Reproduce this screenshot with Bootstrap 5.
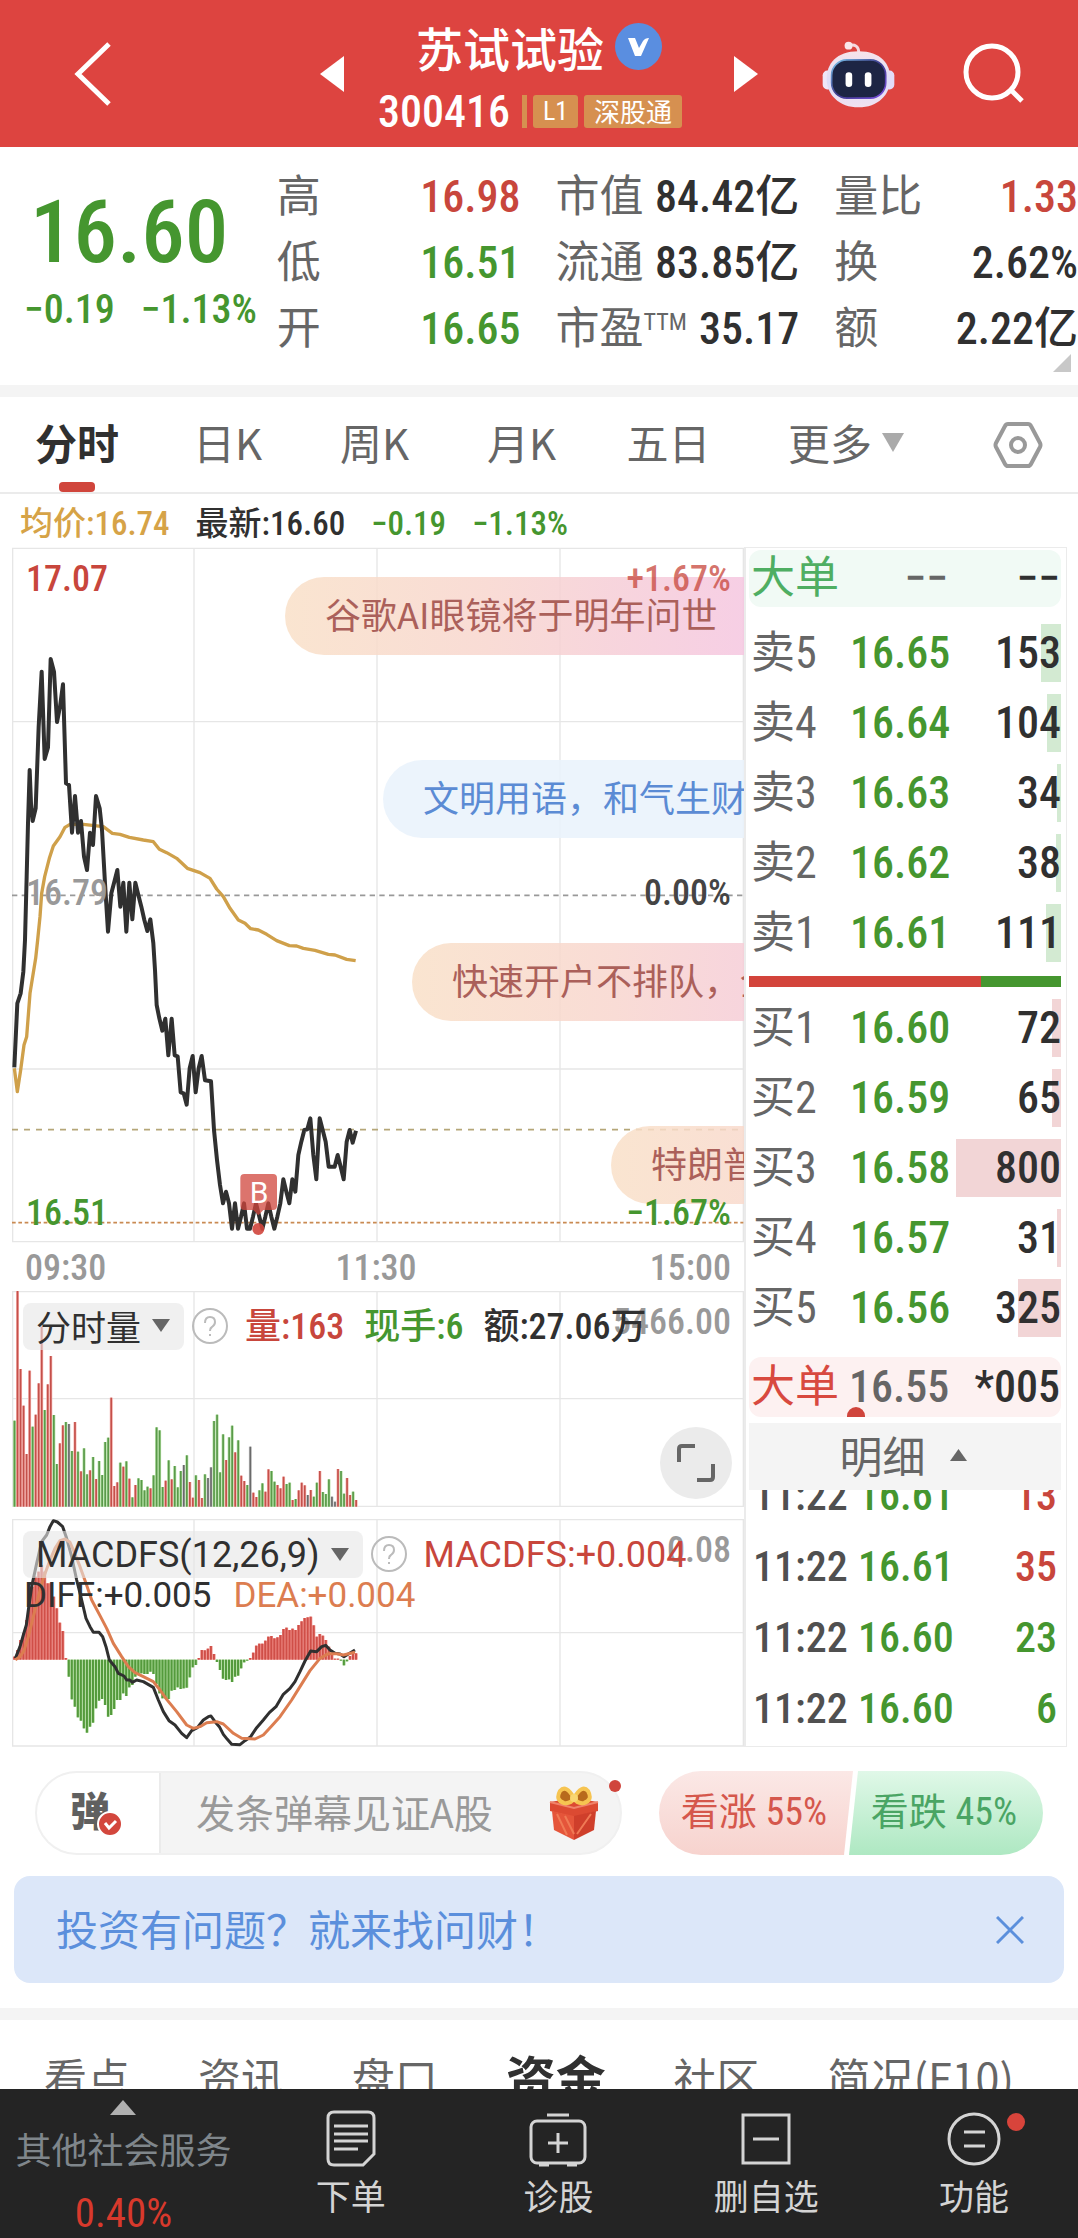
<!DOCTYPE html>
<html lang="zh-CN">
<head>
<meta charset="utf-8">
<meta name="viewport" content="width=device-width, initial-scale=1">
<title>苏试试验 300416</title>
<link rel="stylesheet" href="https://cdn.jsdelivr.net/npm/bootstrap@5.3.0/dist/css/bootstrap.min.css">
<style>
:root{--up:#c8463c;--down:#45962f;--ink:#303030;--dim:#666;--num:"Roboto Condensed",Roboto,"Noto Sans CJK SC",sans-serif}
body{font-family:var(--num);color:var(--ink);background:#fff;font-size:36px;line-height:1}
button,input{font:inherit;color:inherit;border:0;background:none;padding:0}
a{color:inherit;text-decoration:none}
svg{display:block}
.up{color:var(--up)}.down{color:var(--down)}.dim{color:var(--dim)}
.fw-num{font-weight:500}
.cjk{font-family:"Noto Sans CJK SC",sans-serif}
.band{height:12px;background:#f4f4f4}

.topbar{display:grid;grid-template-columns:1fr 24px 390px 24px 1fr;align-items:center;height:147px;background:#dd4440;color:#fff}
.topbar .back{padding-left:74px}
.topbar .tools{gap:68px;padding-right:54px}
.stock-name{font-size:47px;line-height:62px;font-weight:500;gap:11px}
.stock-code{font-size:44px;line-height:40px;font-weight:500;gap:6px;margin:14px 18px 0 0}
.tag{background:#d69050;font-size:26px;line-height:33px;height:33px;border-radius:3px;padding:0 10px;font-weight:400}
.tag.cjk{line-height:31px}
.tag-edge{width:5px;height:33px;background:#d69050;margin-left:6px}

.quote{display:grid;grid-template-columns:repeat(4,minmax(0,1fr));column-gap:37px;padding:16px 0 24px;position:relative}
.quote dl{margin:0 0 0 -2px}
.quote .pair{display:flex;justify-content:space-between;height:66px;line-height:68px;font-size:44px;white-space:nowrap}
.quote dt{font-weight:400;color:var(--dim)}
.quote dd{margin:0;font-weight:500}
.quote .ttm{font-size:24px;vertical-align:14px;line-height:1}
.price-big{font-size:87px;line-height:90px;padding:24px 0 0 30px;font-weight:500}
.price-chg{font-size:40px;line-height:66px;padding-left:24px;gap:26px;white-space:nowrap}
.corner{position:absolute;right:7px;bottom:13px}

.periods{display:grid;grid-template-columns:154fr 147fr 147fr 147fr 147fr 208fr 128fr;height:97px;border-bottom:2px solid #ebebeb}
.periods button{display:flex;align-items:center;justify-content:center;gap:10px;font:400 42px/1 "Noto Sans CJK SC",sans-serif;color:var(--dim);position:relative;padding-bottom:5px}
.periods button:last-child{padding:0 0 0 8px}
.periods .on{font-weight:700;color:var(--ink)}
.periods .on::after{content:"";position:absolute;bottom:0;width:36px;height:10px;border-radius:4px;background:#d0453c}
.avgline{height:53px;line-height:60px;padding-left:20px;gap:26px;font-size:33px}

.board{display:grid;grid-template-columns:732fr 323fr;padding:0 11px 0 12px}
.plot{position:relative;overflow:hidden}
.plot svg.chart{width:100%}
.tick-label{position:absolute;font-size:36px;line-height:42px;font-weight:500}
.l15{left:14px}.r13{right:13px}
.axis{height:48px;line-height:50px;padding:0 13px;color:#999}
.axis span:nth-child(2){margin-right:4px}
.bullet{position:absolute;height:78px;border-radius:39px 0 0 39px;padding-left:40px;line-height:72px;font-size:36px;white-space:nowrap;color:#ab605a;right:0;overflow:hidden;background:linear-gradient(90deg,rgba(249,224,200,.85),rgba(248,214,206,.85) 200px,rgba(246,206,214,.85) 320px,rgba(245,198,224,.85) 460px)}
.bullet.calm{color:#5b8bd4;background:rgba(233,242,252,.85)}
.strip{position:absolute;left:11px;top:12px;white-space:nowrap;height:47px}
.pick{background:rgba(230,230,230,.6);border-radius:8px;height:47px;padding:0 14px 0 13px;gap:11px;display:flex;align-items:center}
.pick.cjk{padding-bottom:3px;font-size:35px}
.vol-strip{font-size:36px}
.macd-strip{font-family:Roboto,sans-serif}
.macd-second{position:absolute;left:12px;top:57px;font:400 35px/40px Roboto,sans-serif;gap:22px}
.zoomer{position:absolute;right:12px;bottom:12px;width:72px;height:72px;border-radius:50%;background:#ebebeb;display:grid;place-items:center}

.depth{border:1px solid #ebebeb;border-left-width:2px;height:1200px;padding:2px 5px 0 3px;overflow:hidden;font-size:44px}
.depth table{width:100%;table-layout:fixed;border-collapse:collapse}
.depth th,.depth td{padding:0;font-weight:500;white-space:nowrap;position:relative}
.depth th{font-weight:400;color:var(--dim);padding-left:2px}
.depth col.c1{width:101px}.depth col.c2{width:104px}
.book tr{height:70px}
.book td:last-child{text-align:right}
.book i{position:absolute;right:0;top:6px;height:58px;z-index:-1}
.book td:last-child{z-index:0}
.asks i{background:#d3ead2}.bids i{background:#f2d5d6}
.big{display:grid;grid-template-columns:98px 99px 1fr;padding:0 1px 0 2px;border-radius:12px;font-weight:500}
.big span:first-child{font-weight:400}
.big span:not(:first-child){text-align:right}
.big.sell{background:#f1faf5;height:57px;line-height:57px;margin-bottom:11px}
.big.buy{background:#fdf1f1;height:60px;line-height:60px;margin:14px 0 6px;position:relative;overflow:hidden}
.big.buy::after{content:"";position:absolute;left:98px;top:50px;width:18px;height:18px;border-radius:50%;background:#d0453c}
.balance{height:11px;margin:8px 0 6px;background:var(--down)}
.balance div{height:11px;background:#d3443b}
.detail{width:100%;height:67px;background:#f4f4f4;color:var(--dim);font-size:43px;display:flex;align-items:center;justify-content:center;gap:24px;padding:0 4px 4px 0}
.trades{overflow:hidden}
.trades table{margin-top:-30px;font-size:42px}
.trades tr{height:71px}
.trades th{padding-left:4px;color:#505050;font-weight:500}
.trades td:nth-child(2){padding-left:8px}
.trades td:last-child{text-align:right;padding-right:4px}

.talk{padding:24px 35px 21px;gap:37px}
.say{flex:1;min-width:0;height:84px;border-radius:42px;border:2px solid #f0f0f0;background:#f4f4f4;position:relative}
.say .dan{flex:none;width:124px;background:#fff;border-right:2px solid #ebebeb;border-radius:42px 0 0 42px;position:relative;font:900 40px/1 "Noto Sans CJK SC",sans-serif;color:#606060;padding:0 16px 8px 0}
.say .dan svg{position:absolute;left:60px;top:38px}
.say input{flex:1;width:0;min-width:0;padding:0 0 4px 35px;font-size:39px}
.say input::placeholder{color:#999;opacity:1}
.say .gift{padding-right:21px}
.say .dot{position:absolute;right:-1px;top:7px;width:12px;height:12px;border-radius:50%;background:#d0453c}
.vote{flex:none;width:384px;height:84px;border-radius:42px;overflow:hidden}
.vote button{flex:1;font-size:38px;padding:0 4px 2px 0}
.vote .bull{color:#d5574c;background:linear-gradient(#fbe8e6,#f7d3ce);clip-path:polygon(0 0,100% 0,calc(100% - 9px) 100%,0 100%)}
.vote .bear{color:#4aa564;background:linear-gradient(#e0f8e8,#aee8c2);clip-path:polygon(9px 0,100% 0,100% 100%,0 100%);margin-left:-4px}
.ask{margin:0 14px 25px;height:107px;border-radius:16px;background:#dce7f9;color:#5b8fdc;padding:0 40px 0 42px;font-size:42px}
.ask a{padding-bottom:4px}
.sections{display:flex;height:118px;line-height:112px;padding:0 64px 0 44px;justify-content:space-between;font-family:"Noto Sans CJK SC",sans-serif;font-size:43px;color:var(--dim);white-space:nowrap}
.sections .on{font-weight:700;font-size:50px;color:var(--ink)}

.dock{display:grid;grid-template-columns:247fr 208fr 208fr 208fr 208fr;height:149px;background:#242424;color:#d4d4d4}
.dock a{display:flex;flex-direction:column;align-items:center;font-size:35px;line-height:44px;padding-top:20px;gap:6px;position:relative;white-space:nowrap}
.dock .sector{color:#7f868b;font-size:36px;padding-top:11px;gap:11px}
.dock .sector b{font-weight:400;font-size:41px;color:#d8392c;line-height:44px;margin-top:10px}
.dock .dot{position:absolute;left:137px;top:24px;width:18px;height:18px;border-radius:50%;background:#d8443b}
</style>
<script src="https://cdn.jsdelivr.net/npm/bootstrap@5.3.0/dist/js/bootstrap.bundle.min.js"></script>
</head>
<body>
<header class="topbar">
  <button class="back" aria-label="返回"><svg width="38" height="64" viewBox="0 0 38 64" fill="none" stroke="#fff" stroke-width="5"><path d="M35 2 4 32l31 30"/></svg></button>
  <button aria-label="上一只"><svg width="24" height="36" viewBox="0 0 24 36"><path d="M24 0v36L0 18z" fill="#fff"/></svg></button>
  <div class="d-flex flex-column align-items-center">
    <div class="stock-name cjk d-flex align-items-center">苏试试验
      <svg width="47" height="47" viewBox="0 0 47 47"><circle cx="23.500" cy="23.500" r="23.500" fill="#5a8ee0"/><path d="M13 15h7l4 10 4-7q2-3 6-3l-8 18h-6z" fill="#fff"/></svg></div>
    <div class="stock-code d-flex align-items-center">300416<span class="tag-edge"></span><span class="tag">L1</span><span class="tag cjk">深股通</span></div>
  </div>
  <button aria-label="下一只"><svg width="24" height="36" viewBox="0 0 24 36"><path d="M0 0v36l24-18z" fill="#fff"/></svg></button>
  <div class="tools d-flex justify-content-end align-items-center">
    <button aria-label="智能助手"><svg width="73" height="68" viewBox="130 55 220 205">
      <defs><linearGradient id="shell" x1="0" y1="0" x2="0" y2="1"><stop offset="0" stop-color="#f7e4ea"/><stop offset=".55" stop-color="#dcdcf8"/><stop offset="1" stop-color="#f1e2f0"/></linearGradient>
      <linearGradient id="rim" x1="0" y1="0" x2="1" y2="1"><stop offset="0" stop-color="#7cc6ee"/><stop offset=".5" stop-color="#3d3a8c"/><stop offset="1" stop-color="#7b4fe0"/></linearGradient></defs>
      <path d="M210 72q30-8 31 22" fill="none" stroke="#f4d9e0" stroke-width="9"/><circle cx="210" cy="72" r="12" fill="#fae6ea"/>
      <rect x="132" y="147" width="30" height="57" rx="14" fill="#efe6f8"/><rect x="318" y="147" width="30" height="57" rx="14" fill="#e3dcf8"/>
      <path d="M240 89c68 0 96 38 96 84s-38 85-96 85-96-39-96-85 28-84 96-84z" fill="url(#shell)"/>
      <rect x="159" y="115" width="163" height="115" rx="46" fill="#1d2544" stroke="url(#rim)" stroke-width="5"/>
      <rect x="201" y="152" width="20" height="45" rx="10" fill="#fff"/><rect x="259" y="152" width="20" height="45" rx="10" fill="#fff"/></svg></button>
    <button aria-label="搜索"><svg width="61" height="61" viewBox="0 0 61 61" fill="none" stroke="#fff" stroke-width="5"><circle cx="29" cy="29" r="26"/><path d="m48 47 11 11"/></svg></button>
  </div>
</header>

<main>
<section class="quote">
  <div class="down">
    <div class="price-big">16.60</div>
    <div class="price-chg fw-num d-flex"><span>−0.19</span><span>−1.13%</span></div>
  </div>
  <dl>
    <div class="pair"><dt>高</dt><dd class="up">16.98</dd></div>
    <div class="pair"><dt>低</dt><dd class="down">16.51</dd></div>
    <div class="pair"><dt>开</dt><dd class="down">16.65</dd></div>
  </dl>
  <dl>
    <div class="pair"><dt>市值</dt><dd>84.42亿</dd></div>
    <div class="pair"><dt>流通</dt><dd>83.85亿</dd></div>
    <div class="pair"><dt>市盈<span class="ttm">TTM</span></dt><dd>35.17</dd></div>
  </dl>
  <dl>
    <div class="pair"><dt>量比</dt><dd class="up">1.33</dd></div>
    <div class="pair"><dt>换</dt><dd>2.62%</dd></div>
    <div class="pair"><dt>额</dt><dd>2.22亿</dd></div>
  </dl>
  <svg class="corner" width="18" height="18" viewBox="0 0 18 18"><path d="M18 0v18H0z" fill="#c8c8c8"/></svg>
</section>
<div class="band"></div>

<nav class="periods" aria-label="周期">
  <button class="on">分时</button><button>日K</button><button>周K</button><button>月K</button><button>五日</button>
  <button>更多<svg width="22" height="19" viewBox="0 0 22 19"><path d="M0 0h22L11 19z" fill="#aaa"/></svg></button>
  <button aria-label="设置"><svg width="50" height="48" viewBox="0 0 50 48" fill="none" stroke="#999" stroke-width="4"><path d="M15 3h20q2 0 3 2l9 17q1 2 0 4l-9 17q-1 2-3 2H15q-2 0-3-2L3 26q-1-2 0-4l9-17q1-2 3-2z"/><circle cx="25" cy="24" r="7"/></svg></button>
</nav>
<div class="avgline d-flex fw-num"><span style="color:#d6a347">均价:16.74</span><span>最新:16.60</span><span class="down">−0.19</span><span class="down">−1.13%</span></div>

<section class="board">
  <div>
    <div class="plot">
      <svg class="chart" height="696" viewBox="36 21 2196 2088" preserveAspectRatio="none" fill="none">
        <g stroke="#e6e6e6" stroke-width="4"><path d="M38 25H2230V2105H38zM582 25V2105M1131 25V2105M1680 25V2105M38 545H2230M38 1587H2230"/></g>
        <path d="M36 1066H2230" stroke="#999" stroke-width="5" stroke-dasharray="16 13"/>
        <path d="M36 1769H2230" stroke="#b5a678" stroke-width="5" stroke-dasharray="18 18"/>
        <path d="M36 2048H2230" stroke="#c98a52" stroke-width="5" stroke-dasharray="11 8"/>
        <polyline stroke="#cfa04a" stroke-width="10" stroke-linejoin="round" points="43,1585 52,1655 62,1590 72,1515 80,1490 90,1360 107,1255 113,1200 120,1130 125,1060 134,1010 148,955 160,918 180,890 195,862 210,853 250,853 310,860 337,880 360,883 388,892 430,900 460,905 478,928 500,938 530,955 562,985 600,998 630,1015 650,1047 670,1070 690,1105 715,1140 735,1150 752,1166 775,1170 800,1183 830,1202 868,1217 890,1218 910,1225 945,1231 985,1243 1005,1245 1040,1258 1067,1262"/>
        <polyline stroke="#303030" stroke-width="12" stroke-linejoin="round" points="43,1582 52,1390 62,1360 70,1295 75,1200 80,1010 84,850 89,690 93,790 98,843 107,805 116,560 125,395 134,657 144,622 152,357 162,395 171,546 180,500 189,433 198,730 207,735 216,878 225,768 234,878 243,843 252,950 261,990 270,878 279,915 288,768 299,805 306,870 315,1030 324,1175 334,1060 343,1025 352,990 361,1100 370,1028 379,1175 388,1028 397,1138 406,1028 415,1065 424,1100 433,1140 442,1173 451,1138 460,1210 465,1290 470,1395 478,1435 487,1472 496,1436 505,1546 515,1436 524,1546 533,1549 542,1657 551,1660 560,1694 569,1585 578,1548 587,1657 596,1585 605,1548 615,1621 633,1624 642,1770 651,1860 660,1935 669,1990 678,1955 687,1990 696,2066 705,1990 714,2066 723,2030 732,1990 741,2066 750,2066 759,2030 768,1990 778,2030 787,2066 796,2030 805,1990 814,2030 823,2066 832,2030 841,1990 850,1918 859,1955 868,1990 877,1918 886,1955 895,1845 904,1805 913,1770 922,1768 931,1735 940,1845 949,1918 959,1735 968,1770 977,1805 986,1880 1004,1880 1013,1845 1022,1880 1031,1918 1040,1805 1049,1770 1058,1808 1068,1772"/>
        <path d="M733 1902h86q12 0 12 12v84q0 12-12 12h-29l-15 16-15-16h-27q-12 0-12-12v-84q0-12 12-12z" fill="#d0453c" fill-opacity=".75"/>
        <circle cx="775" cy="2067" r="18" fill="#d0453c" fill-opacity=".9"/>
        <text x="777" y="1988" font-size="90" font-family="Roboto, sans-serif" text-anchor="middle" fill="#fff">B</text>
      </svg>
      <span class="tick-label l15 up" style="top:11px">17.07</span>
      <span class="tick-label l15" style="top:325px;color:#999">16.79</span>
      <span class="tick-label r13" style="top:325px;color:#444">0.00%</span>
      <span class="tick-label l15 down" style="top:645px">16.51</span>
      <div class="bullet cjk" style="top:30px;left:273px">谷歌AI眼镜将于明年问世</div>
      <div class="bullet calm cjk" style="top:213px;left:371px">文明用语，和气生财</div>
      <div class="bullet cjk" style="top:396px;left:400px">快速开户不排队，全</div>
      <div class="bullet cjk" style="top:579px;left:599px">特朗普</div>
      <span class="tick-label r13 up opacity-75" style="top:11px">+1.67%</span>
      <span class="tick-label r13 down" style="top:645px">−1.67%</span>
    </div>
    <div class="axis d-flex justify-content-between fw-num"><span>09:30</span><span>11:30</span><span>15:00</span></div>
    <div class="plot mb-2 pb-1">
      <svg class="chart" id="volume" height="216" viewBox="36 63 2196 648" preserveAspectRatio="none" fill="none">
        <path stroke="#e6e6e6" stroke-width="4" d="M38 65H2230V709H38zM582 65V709M1131 65V709M1680 65V709M38 386H2230"/>
      </svg>
      <span class="tick-label r13" style="top:10px;color:#999">5466.00</span>
      <div class="strip vol-strip d-flex align-items-center">
        <button class="pick cjk">分时量<svg width="18" height="13" viewBox="0 0 18 13"><path d="M0 0h18L9 13z" fill="#666"/></svg></button>
        <button class="ms-2 me-3" aria-label="说明"><svg width="37" height="37" viewBox="0 0 37 37" fill="none" stroke="#bbb" stroke-width="2"><circle cx="18" cy="18" r="17"/><path d="M13 15q0-6 5-6t5 5q0 3-3 5-2 1-2 4M18 26v2"/></svg></button>
        <span class="up fw-num me-3">量:163</span><span class="down fw-num mx-1">现手:6</span><span class="fw-num ms-3">额:27.06万</span>
      </div>
      <button class="zoomer" aria-label="全屏"><svg width="38" height="38" viewBox="0 0 38 38" fill="none" stroke="#666" stroke-width="4"><path d="M2 18V5q0-3 3-3h13M36 20v13q0 3-3 3H20"/></svg></button>
    </div>
    <div class="plot">
      <svg class="chart" id="macd" height="228" viewBox="36 57 2196 684" preserveAspectRatio="none" fill="none">
        <path stroke="#e6e6e6" stroke-width="4" d="M38 59H2230V738H38zM582 59V738M1131 59V738M1680 59V738M38 398H2230"/>
        <g id="macdBars"></g>
        <polyline stroke="#303030" stroke-width="9" stroke-linejoin="round" points="46,475 60,440 70,405 79,375 85,330 95,260 110,190 125,125 140,105 150,80 160,62 172,66 188,80 200,115 215,170 230,240 245,300 258,355 270,380 280,397 297,397 308,410 318,440 328,480 345,500 355,520 372,528 380,540 390,540 397,547 410,540 430,545 460,562 475,600 490,635 507,662 525,675 545,700 560,713 575,692 592,683 610,660 625,650 633,648 645,665 658,680 670,703 682,718 695,733 720,734 735,722 752,710 770,683 790,660 808,638 828,620 850,583 870,565 885,545 900,515 915,483 932,453 950,455 965,440 977,436 990,450 1005,460 1020,462 1032,470 1045,462 1065,450"/>
        <polyline stroke="#dc7d50" stroke-width="9" stroke-linejoin="round" points="46,479 60,470 72,452 85,410 100,350 115,290 130,235 150,180 165,145 180,122 195,117 210,127 220,150 240,200 258,250 275,300 300,347 320,385 340,430 365,470 385,500 405,518 430,530 460,545 480,570 500,598 530,635 560,675 580,685 600,680 620,668 650,665 670,672 700,700 725,715 765,717 790,705 815,678 840,650 875,600 900,560 930,512 960,475 985,461 1010,461 1030,465 1065,457"/>
      </svg>
      <span class="tick-label r13" style="top:10px;color:#999">0.08</span>
      <div class="strip macd-strip d-flex align-items-center">
        <button class="pick">MACDFS(12,26,9)<svg width="18" height="13" viewBox="0 0 18 13"><path d="M0 0h18L9 13z" fill="#666"/></svg></button>
        <button class="ms-2 me-3" aria-label="说明"><svg width="37" height="37" viewBox="0 0 37 37" fill="none" stroke="#bbb" stroke-width="2"><circle cx="18" cy="18" r="17"/><path d="M13 15q0-6 5-6t5 5q0 3-3 5-2 1-2 4M18 26v2"/></svg></button>
        <span class="up">MACDFS:+0.004</span>
      </div>
      <div class="macd-second d-flex"><span>DIFF:+0.005</span><span style="color:#dc7d50">DEA:+0.004</span></div>
    </div>
  </div>

  <aside class="depth">
    <div class="big sell"><span style="color:#4fae62">大单</span><span class="dim">−−</span><span>−−</span></div>
    <table class="book asks"><colgroup><col class="c1"><col class="c2"><col></colgroup><tbody id="asks"></tbody></table>
    <div class="balance"><div style="width:74.500%"></div></div>
    <table class="book bids"><colgroup><col class="c1"><col class="c2"><col></colgroup><tbody id="bids"></tbody></table>
    <div class="big buy"><span style="color:#d8493f">大单</span><span class="dim">16.55</span><span>*005</span></div>
    <button class="detail cjk">明细<svg width="17" height="12" viewBox="0 0 17 12"><path d="M0 12h17L8.500 0z" fill="#666"/></svg></button>
    <div class="trades"><table><colgroup><col class="c1"><col class="c2"><col></colgroup><tbody>
      <tr><th>11:22</th><td class="down">16.61</td><td class="up">13</td></tr>
      <tr><th>11:22</th><td class="down">16.61</td><td class="up">35</td></tr>
      <tr><th>11:22</th><td class="down">16.60</td><td class="down">23</td></tr>
      <tr><th>11:22</th><td class="down">16.60</td><td class="down">6</td></tr>
    </tbody></table></div>
  </aside>
</section>

<section class="talk d-flex">
  <div class="say d-flex align-items-stretch">
    <button class="dan" aria-label="弹幕开关">弹<svg width="26" height="26" viewBox="0 0 26 26"><circle cx="13" cy="13" r="12" fill="#d3473d" stroke="#fff" stroke-width="2"/><path d="m8 12 4 5 7-7" fill="none" stroke="#fff" stroke-width="3"/></svg></button>
    <label class="visually-hidden" for="danmu">发弹幕</label>
    <input id="danmu" type="text" class="cjk" placeholder="发条弹幕见证A股">
    <button class="gift" aria-label="礼物"><svg width="50" height="54" viewBox="0 0 50 54">
      <path d="M1 16 25 12l24 4v9L25 31 1 25z" fill="#dc4a32"/><path d="m3 25 22 5v24L5 44z" fill="#e5553a"/><path d="m47 25-22 5v24l20-10z" fill="#cf3f2b"/>
      <path d="m8 28 10 21M16 30l9 18M42 28l-14 20" stroke="#f07a55" stroke-width="2"/><path d="m1 16 24 6 24-6" fill="none" stroke="#f0836a" stroke-width="2"/>
      <path d="M25 12Q17-2 11 5q-5 9 4 12 7 1 10-5zM25 12q8-14 14-7 5 9-4 12-7 1-10-5z" fill="#b86a1c" stroke="#f6c451" stroke-width="4"/><circle cx="25" cy="12" r="4" fill="#f9d671"/></svg></button>
    <span class="dot"></span>
  </div>
  <div class="vote d-flex"><button class="bull">看涨 55%</button><button class="bear">看跌 45%</button></div>
</section>
<div class="ask cjk d-flex align-items-center justify-content-between"><a href="#ask">投资有问题？就来找问财！</a>
  <button aria-label="关闭"><svg width="28" height="28" viewBox="0 0 28 28" stroke="#5b8fdc" stroke-width="3"><path d="m1 1 26 26M27 1 1 27"/></svg></button></div>
<div class="band"></div>
<nav class="sections" aria-label="栏目"><a href="#v">看点</a><a href="#n">资讯</a><a href="#p">盘口</a><a class="on" href="#m">资金</a><a href="#c">社区</a><a href="#f">简况(F10)</a></nav>
</main>

<footer class="dock fixed-bottom">
  <a class="sector" href="#sector"><svg width="26" height="15" viewBox="0 0 26 15"><path d="M0 15h26L13 0z" fill="#b0b0b0"/></svg><span class="cjk">其他社会服务</span><b>0.40%</b></a>
  <a class="cjk" href="#order"><svg width="50" height="58" viewBox="0 0 50 58" fill="none" stroke="#d4d4d4" stroke-width="3"><path d="M8 3h34q6 0 6 6v36L37 56H8q-6 0-6-6V9q0-6 6-6zM8 17h34M8 25h34M8 32h34M8 40h24"/></svg>下单</a>
  <a class="cjk" href="#diag"><svg width="58" height="58" viewBox="0 0 58 58" fill="none" stroke="#d4d4d4" stroke-width="3"><rect x="2" y="12" width="54" height="42" rx="6"/><path d="M18 6h22M29 24v20M19 34h20M10 56h10M38 56h10"/></svg>诊股</a>
  <a class="cjk" href="#del"><svg width="50" height="58" viewBox="0 0 50 58" fill="none" stroke="#d4d4d4" stroke-width="3"><rect x="2" y="6" width="46" height="48"/><path d="M12 30h26"/></svg>删自选</a>
  <a class="cjk" href="#more"><svg width="54" height="58" viewBox="0 0 54 58" fill="none" stroke="#d4d4d4" stroke-width="3"><circle cx="27" cy="30" r="25"/><path d="M17 23h21M17 37h21"/></svg>功能<span class="dot"></span></a>
</footer>

<script>
const NS='http://www.w3.org/2000/svg', STEP=9.07;
const color={r:'#c4504a',g:'#5a9a4a',k:'#6a6a6a'}, tint={r:'#f7b4b0',g:'#b4e0a4',k:'#ccc'};
function bar(host,x,y,w,h,fill){const r=document.createElementNS(NS,'rect');Object.entries({x,y,width:w,height:h,fill}).forEach(([k,v])=>r.setAttribute(k,v));host.append(r);}
const volume='g452 r62 r297 r407 r552 r302 g470 r434 r340 r170 g420 r343 r258 g435 g582 r520 r466 g456 k462 g543 r456 g545 r604 g535 g613 r601 g561 r627 g573 g615 g516 g503 r383 r648 r637 g578 r590 g574 r626 g682 r645 g625 g630 g661 g650 r655 g616 g472 g481 g651 r632 g571 r628 g588 g652 g603 k585 g556 r636 r683 g616 r630 r684 g613 k624 k592 g453 g434 g607 g493 r570 g502 g467 r547 g511 r617 r633 g645 k530 r668 r681 g661 g640 r665 r598 g603 g635 r645 r655 r620 g642 g638 r690 g687 r661 r638 r646 k675 r660 g680 g638 r603 g666 g672 g628 k680 k695 r597 g603 g671 r624 r675 g665 r690'.split(' ');
const vol=document.getElementById('volume');
volume.forEach((v,i)=>{const y=+v.slice(1),x=43+i*STEP;bar(vol,x-4,y,9,710-y,tint[v[0]]);});
volume.forEach((v,i)=>{const y=+v.slice(1),x=43+i*STEP;bar(vol,x-2,y,5,710-y,color[v[0]]);});
const macd=[470,450,420,400,360,300,260,230,215,195,215,250,250,290,325,368,393,474,530,598,620,652,662,685,698,680,668,625,602,597,615,650,645,627,600,600,580,588,562,555,530,525,520,522,522,515,522,552,580,595,595,597,572,570,562,567,565,563,532,502,495,474,450,451,446,438,462,486,510,536,540,538,546,530,527,505,487,482,474,458,437,431,431,422,410,408,415,412,405,387,383,390,386,390,375,364,354,352,350,376,410,402,407,420,440,460,476,476,482,496,484,468,462,460];
const mb=document.getElementById('macdBars');
macd.forEach((y,i)=>{const x=43+i*STEP,top=Math.min(y,479),h=Math.abs(y-479);bar(mb,x-4,top,9,h,y<479?'#f08a84':'#a4d690');bar(mb,x-3,top,6,h,y<479?'#cf4f48':'#549a3c');});
function book(id,name,rows){document.getElementById(id).innerHTML=rows.map(([n,p,v])=>`<tr><th>${name}${n}</th><td class="down">${p}</td><td><i style="width:${Math.round(Math.max(v*105/800,4))}px"></i>${v}</td></tr>`).join('');}
book('asks','卖',[[5,'16.65',153],[4,'16.64',104],[3,'16.63',34],[2,'16.62',38],[1,'16.61',111]]);
book('bids','买',[[1,'16.60',72],[2,'16.59',65],[3,'16.58',800],[4,'16.57',31],[5,'16.56',325]]);
</script>
</body>
</html>
